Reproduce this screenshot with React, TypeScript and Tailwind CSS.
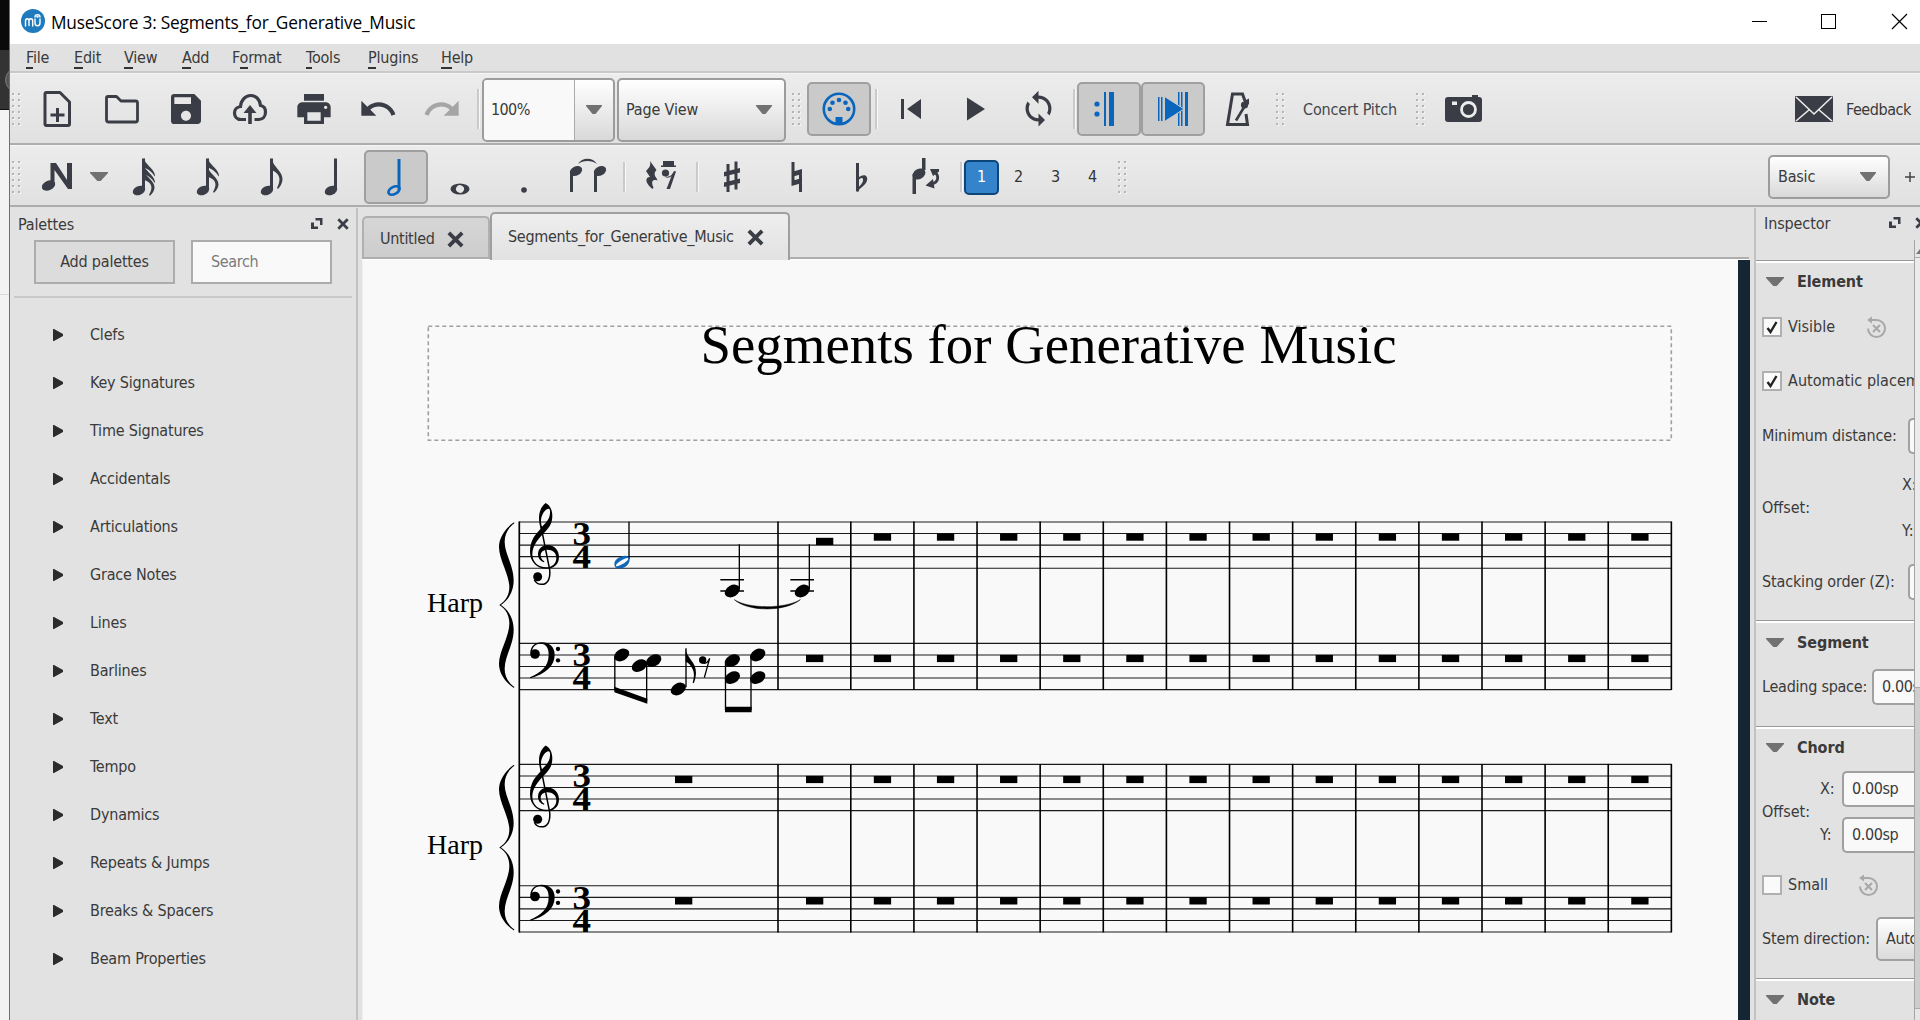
import React from "react";
import { MdLoop, MdPrint, MdRedo, MdSave, MdUndo } from "react-icons/md";

const INK = "#3a3d45";
const BLUE = "#0a66bd";

/* ---------- small shared pieces ---------- */

function Grip({ className = "" }: { className?: string }) {
  return (
    <div className={`grid shrink-0 grid-cols-2 gap-x-[4px] gap-y-[4px] ${className}`}>
      {Array.from({ length: 12 }, (_, i) => (
        <span key={i} className="size-[2px] bg-[#b4b4b4] shadow-[1px_1px_0_#f6f6f6]" />
      ))}
    </div>
  );
}

function Sep({ className = "" }: { className?: string }) {
  return <div className={`w-[3px] shrink-0 border-l-2 border-[#cacaca] bg-[#f8f8f8] ${className}`} />;
}

function Caret({ w = 16, className = "" }: { w?: number; className?: string }) {
  return (
    <svg width={w} height="10" viewBox="0 0 16 10" preserveAspectRatio="none" className={`shrink-0 ${className}`}>
      <path d="M0 0H16V1L9.5 9H6.5L0 1Z" fill="#717171" />
    </svg>
  );
}

function ToolIcon({ children, vb = "0 0 40 40", size = 40, w = 64 }: { children: React.ReactNode; vb?: string; size?: number; w?: number }) {
  return (
    <div className="flex h-[54px] shrink-0 items-center justify-center" style={{ width: w }}>
      <svg width={size} height={size} viewBox={vb} fill={INK}>
        {children}
      </svg>
    </div>
  );
}

const pressed =
  "flex h-[54px] w-[64px] shrink-0 items-center justify-center rounded-[5px] border-2 border-[#9f9f9f] bg-[#cacaca]";

/* ---------- title and menu bars ---------- */

function TitleBar() {
  return (
    <div className="flex h-[44px] shrink-0 items-center bg-white">
      <svg width="24" height="24" viewBox="0 0 24 24" className="mb-[2px] ml-[11px] shrink-0">
        <circle cx="12" cy="12" r="12" fill="#1f7bbd" />
        <path
          d="M4.500 17V12C4.500 9 8 9 8 12V16.500M8 12C8 9 11.700 9 11.700 12V17M14 10V14C14 17.600 19 17.600 19 14V10M14 8C14 4.800 19 4.800 19 8"
          fill="none"
          stroke="white"
          strokeWidth="1.400"
          strokeLinecap="round"
        />
        <circle cx="16.500" cy="7.600" r="1.200" fill="white" />
      </svg>
      <span className="ml-[6px] pt-[2px] font-['Open_Sans'] text-[17.3px] tracking-[-0.2px] whitespace-nowrap text-black [font-stretch:normal]">
        MuseScore 3: Segments_for_Generative_Music
      </span>
      <svg width="170" height="20" viewBox="1750 12 170 20" fill="none" stroke="black" shapeRendering="crispEdges" className="ml-auto shrink-0">
        <path d="M1752 21.500H1767" />
        <rect x="1821.500" y="14.500" width="14" height="14" />
        <path d="M1892 14L1907 29M1907 14L1892 29" shapeRendering="auto" strokeWidth="1.200" />
      </svg>
    </div>
  );
}

const menus: [string, number][] = [
  ["File", 48],
  ["Edit", 50],
  ["View", 58],
  ["Add", 50],
  ["Format", 74],
  ["Tools", 62],
  ["Plugins", 73],
  ["Help", 50],
];

function MenuBar() {
  return (
    <div className="h-[30px] shrink-0 border-b border-[#f4f4f4] bg-[#e1e1e1]">
      <div className="flex h-[29px] w-full border-b-2 border-[#c9c9c9] pl-[16px]">
        {menus.map(([m, w]) => {
          const k = m === "Format" ? 1 : 0;
          return (
            <span key={m} className="pt-[3px] leading-[22px] tracking-[-0.2px]" style={{ width: w }}>
              {m.slice(0, k)}
              <span className="border-b-2 border-[#333]">{m[k]}</span>
              {m.slice(k + 1)}
            </span>
          );
        })}
      </div>
    </div>
  );
}

/* ---------- main toolbar ---------- */

function MainToolbar() {
  return (
    <div className="flex h-[71px] shrink-0 items-center border-b-2 border-[#adadad] bg-gradient-to-b from-[#ececec] to-[#e1e1e1] pl-[2px]">
      <Grip />
      <div className="ml-[6px] flex">
        <ToolIcon>
          <path d="M8.500 3.500H22L31.500 13V35C31.500 35.800 30.800 36.500 30 36.500H8.500C7.700 36.500 7 35.800 7 35V5C7 4.200 7.700 3.500 8.500 3.500Z" fill="none" stroke={INK} strokeWidth="3" strokeLinejoin="round" />
          <path d="M18 19H21V24.500H26.500V27.500H21V33H18V27.500H12.500V24.500H18Z" />
        </ToolIcon>
        <ToolIcon>
          <path d="M6 7.500H14.500L19 12H33.500C35 12 35.500 12.800 35.500 14V31C35.500 32.300 34.700 33 33.500 33H6.500C5.300 33 4.500 32.300 4.500 31V9C4.500 8 5 7.500 6 7.500Z" fill="none" stroke={INK} strokeWidth="2.800" strokeLinejoin="round" />
        </ToolIcon>
        <div className="flex w-[64px] items-center justify-center">
          <MdSave size={40} color={INK} />
        </div>
        <ToolIcon>
          <path d="M16 30.500H11C6.500 30.500 4.500 27 4.500 24C4.500 20.500 7 18 10.500 17.500C11 11 15.500 6.500 20.500 6.500C26 6.500 30 10.500 30.500 16.500C33.500 17 35.500 19.500 35.500 23C35.500 27 33 30.500 29 30.500H24.500" fill="none" stroke={INK} strokeWidth="3.200" />
          <path d="M20 16L26.500 24H21.800V35H18.200V24H13.500Z" />
        </ToolIcon>
        <div className="flex w-[64px] items-center justify-center">
          <MdPrint size={40} color={INK} />
        </div>
        <div className="flex w-[64px] items-center justify-center">
          <MdUndo size={40} color={INK} />
        </div>
        <div className="flex w-[64px] items-center justify-center">
          <MdRedo size={40} color="#a5a5a5" />
        </div>
      </div>
      <Sep className="ml-[3px] h-[40px]" />
      <div className="mt-[3px] ml-[2px] flex h-[64px] w-[133px] shrink-0 rounded-[5px] border-2 border-[#9c9c9c] bg-gradient-to-b from-white to-[#d9d9d9]">
        <div className="flex w-[91px] items-center rounded-l-[3px] border-r border-[#aaa] bg-[#f9f9f9] pl-[7px] tracking-[-0.6px]">100%</div>
        <Caret className="m-auto" />
      </div>
      <div className="mt-[3px] ml-[2px] flex h-[64px] w-[169px] shrink-0 items-center justify-between rounded-[5px] border-2 border-[#9c9c9c] bg-gradient-to-b from-white to-[#d9d9d9] pr-[12px] pl-[7px]">
        <span className="tracking-[-0.15px]">Page View</span>
        <Caret />
      </div>
      <Grip className="ml-[6px]" />
      <div className={`${pressed} mt-px ml-[7px]`}>
        <svg width="34" height="34" viewBox="0 0 34 34" fill={BLUE}>
          <circle cx="17" cy="17" r="15.200" fill="none" stroke={BLUE} strokeWidth="2.600" />
          <circle cx="7.800" cy="17" r="2.300" />
          <circle cx="10.500" cy="10.800" r="2.300" />
          <circle cx="17" cy="8" r="2.300" />
          <circle cx="23.500" cy="10.800" r="2.300" />
          <circle cx="26.200" cy="17" r="2.300" />
          <rect x="13.500" y="25" width="7" height="7" />
        </svg>
      </div>
      <Sep className="ml-[4px] h-[40px]" />
      <ToolIcon>
        <path d="M11 10H14V30H11ZM31 10V30L17 20Z" />
      </ToolIcon>
      <ToolIcon w={66}>
        <path d="M12 8.500L30 20L12 31.500Z" />
      </ToolIcon>
      <div className="flex w-[60px] items-center justify-center">
        <MdLoop size={39} color={INK} />
      </div>
      <Sep className="ml-[5px] h-[40px]" />
      <div className={`${pressed} mt-px ml-[1px]`}>
        <svg width="24" height="34" viewBox="0 0 24 34" fill={BLUE} className="mr-[8px]">
          <circle cx="4" cy="12" r="2.600" />
          <circle cx="4" cy="22" r="2.600" />
          <path d="M11 0H13V34H11ZM16 0H21V34H16Z" />
        </svg>
      </div>
      <div className={`${pressed} mt-px`}>
        <svg width="30" height="34" viewBox="0 0 30 34" fill={BLUE}>
          <path d="M0 5H1.500V29H0ZM3 5H4.500V29H3ZM20 0H21.500V34H20ZM23 0H24.500V34H23ZM27 0H30V34H27Z" />
          <path d="M6.500 4.500L26 17L6.500 29.500Z" stroke="#cacaca" strokeWidth="1" />
        </svg>
      </div>
      <ToolIcon w={66}>
        <path d="M27 12L24.500 5H14.500L9.500 35.500H29.500L28 25" fill="none" stroke={INK} strokeWidth="3" />
        <path d="M18 31.500L28 15" stroke={INK} strokeWidth="2.600" />
        <circle cx="26.500" cy="16" r="3.600" />
        <path d="M26 12L31 9.500V15L28 18Z" />
      </ToolIcon>
      <Grip className="ml-[5px]" />
      <span className="mt-[3px] ml-[19px] w-[95px] tracking-[-0.15px] whitespace-nowrap text-[#44474e]">Concert Pitch</span>
      <Grip className="ml-[18px]" />
      <svg width="38" height="28" viewBox="0 0 38 28" className="ml-[21px] shrink-0" fill={INK}>
        <path d="M3 2H27V0H33V2H34C36 2 37 3 37 5V24C37 26 36 27 34 27H3C1 27 0 26 0 24V5C0 3 1 2 3 2Z" />
        <circle cx="23.500" cy="14.500" r="7" fill="none" stroke="#ececec" strokeWidth="2.800" />
        <rect x="7" y="6.500" width="5" height="3.500" fill="#ececec" />
      </svg>
      <svg width="38" height="26" viewBox="0 0 38 26" className="ml-auto shrink-0">
        <rect width="38" height="26" fill={INK} rx="1" />
        <path d="M1 1L19 18L37 1M1 25L14.500 13.500M37 25L23.500 13.500" fill="none" stroke="#ececec" strokeWidth="1.600" />
      </svg>
      <span className="mt-[2px] mr-[11px] ml-[13px] w-[63px] tracking-[-0.45px]">Feedback</span>
    </div>
  );
}

/* ---------- note input toolbar ---------- */

function NoteGlyph({ flags }: { flags: number }) {
  return (
    <ToolIcon>
      <ellipse cx="16" cy="33.500" rx="6.500" ry="4.400" transform="rotate(-25 16 33.500)" />
      <path d="M19 1.500H22V33H19Z" />
      {Array.from({ length: flags }, (_, i) => {
        if (flags === 1 || i === flags - 1) {
          const y = flags === 1 ? 2 : flags === 2 ? 10 : 13;
          const sy = flags === 1 ? 1 : 0.86;
          return (
            <path
              key={i}
              transform={`translate(21 ${y}) scale(1 ${sy})`}
              d="M0 0C1 8 11 12 10.500 21C10 25 8 28 6 30L5 29C8 23 8.500 18 5 14.500C3 12.500 1 11.500 0 11.500Z"
            />
          );
        }
        return <path key={i} transform={`translate(21 ${1 + i * 6.500})`} d="M0 0C1 7 9 9 11 17L10.500 18.500C8 13 3 11 0 9.500Z" />;
      })}
    </ToolIcon>
  );
}

function NoteToolbar() {
  return (
    <div className="flex h-[62px] shrink-0 items-center border-t border-b-2 border-t-[#f5f5f5] border-b-[#adadad] bg-gradient-to-b from-[#ececec] to-[#e1e1e1] pt-[3px] pl-[2px]">
      <Grip />
      <svg width="30" height="28" viewBox="0 0 30 28" className="ml-[22px] shrink-0" fill={INK}>
        <ellipse cx="6.500" cy="22.500" rx="7" ry="4.700" transform="rotate(-25 6.500 22.500)" />
        <path d="M8.500 0H14L25 17V0H30V26H26L12.500 7V23H8.500Z" />
      </svg>
      <Caret w={18} className="ml-[18px]" />
      <div className="ml-[3px] flex">
        <NoteGlyph flags={3} />
        <NoteGlyph flags={2} />
        <NoteGlyph flags={1} />
        <NoteGlyph flags={0} />
      </div>
      <div className={`${pressed} -ml-[3px]`}>
        <svg width="40" height="40" viewBox="0 0 40 40" fill={BLUE} className="ml-[5px]">
          <ellipse cx="15" cy="33.500" rx="6" ry="3.600" transform="rotate(-28 15 33.500)" fill="none" stroke={BLUE} strokeWidth="2.600" />
          <path d="M18.500 2H21.500V33H18.500Z" />
        </svg>
      </div>
      <ToolIcon>
        <ellipse cx="20" cy="32" rx="9.500" ry="5.500" />
        <ellipse cx="20" cy="32" rx="4" ry="3.800" fill="#e6e6e6" transform="rotate(30 20 32)" />
      </ToolIcon>
      <ToolIcon>
        <circle cx="20" cy="33" r="2.800" />
      </ToolIcon>
      <ToolIcon>
        <ellipse cx="8" cy="14" rx="6.500" ry="4.600" transform="rotate(-28 8 14)" />
        <ellipse cx="32" cy="14" rx="6.500" ry="4.600" transform="rotate(-28 32 14)" />
        <path d="M2 14H5V35H2ZM26 14H29V35H26ZM10 7C14 0 25 0 29 7C24 3 15 3 10 7Z" />
      </ToolIcon>
      <Sep className="ml-[3px] h-[30px]" />
      <ToolIcon w={70}>
        <path d="M9 4L15.500 13C13 16 13 18 16 22L16.500 23.500C12 22 9.500 24 12.500 30.500L11.500 32C3.500 26 4 20 9 20L5 14C8.500 10.500 10 8.500 9 4Z" />
        <path d="M22 4H33V8.500H35V10H20V8.500H22Z" />
        <circle cx="24.500" cy="16" r="3.600" />
        <path d="M24.500 19.500C29 20.500 31 18 33 14L35 14.500L29 32H25.500L30.500 19C29 20.500 27 21.500 24 20Z" />
      </ToolIcon>
      <Sep className="h-[30px]" />
      <ToolIcon w={66}>
        <path d="M14.500 7H17.500V35H14.500ZM22.500 4.500H25.500V32.500H22.500ZM12 15L28 11V15.500L12 19.500ZM12 25.500L28 21.500V26L12 30Z" />
      </ToolIcon>
      <ToolIcon>
        <path d="M14.500 5H17.500V27H14.500ZM22 13H25V35H22ZM14.500 15L25 12V17L14.500 20ZM14.500 24L25 21V26L14.500 29Z" />
      </ToolIcon>
      <ToolIcon>
        <path d="M15 6H18V34.500H15Z" />
        <path d="M17 21C22 16 27.500 18 26 23.500C25 28 20 30 16.500 34.500V31C20 28 22.500 25 22 22.500C21.500 20 19 21 17 24Z" />
      </ToolIcon>
      <ToolIcon w={63}>
        <ellipse cx="14" cy="17" rx="6.800" ry="5" transform="rotate(-28 14 17)" />
        <path d="M7.500 17H11V37H7.500ZM17 1H20.500V13H17Z" />
        <path d="M27 27C34 25 34 19 30 15" fill="none" stroke={INK} strokeWidth="2.800" />
        <path d="M25 12H34V14.500L28 19ZM20.500 28.500L28 22L29.500 31.500Z" />
      </ToolIcon>
      <Sep className="ml-[4px] h-[30px]" />
      <div className="ml-[1px] flex size-[35px] shrink-0 items-center justify-center rounded-[5px] border-2 border-[#0e4579] bg-[#3584cb] text-white">1</div>
      {["2", "3", "4"].map((v) => (
        <span key={v} className="w-[37px] shrink-0 pl-[2px] text-center text-[#333]">{v}</span>
      ))}
      <Grip className="ml-[8px]" />
      <div className="mr-[20px] ml-auto flex h-[44px] w-[122px] shrink-0 items-center justify-between rounded-[5px] border-2 border-[#9c9c9c] bg-gradient-to-b from-white to-[#d9d9d9] pr-[12px] pl-[8px]">
        <span className="tracking-[-0.2px]">Basic</span>
        <Caret />
      </div>
      <svg width="10" height="10" viewBox="0 0 10 10" className="mr-[5px] -ml-[5px] shrink-0">
        <path d="M5 0V10M0 5H10" stroke="#444" strokeWidth="1.500" />
      </svg>
    </div>
  );
}

/* ---------- dock header glyphs ---------- */

function FloatIcon() {
  return (
    <svg width="12" height="12" viewBox="0 0 12 12" fill={INK} className="shrink-0">
      <path d="M4.500 0H11.500V7H9V2.500H4.500ZM0 4.500H3V8.500H7V11H0Z" />
    </svg>
  );
}

function Cross({ size = 12 }: { size?: number }) {
  return (
    <svg width={size} height={size} viewBox="0 0 12 12" className="shrink-0">
      <path d="M1.300 1.300L10.700 10.700M10.700 1.300L1.300 10.700" stroke={INK} strokeWidth="2.700" />
    </svg>
  );
}

/* ---------- palettes ---------- */

const palettes = [
  "Clefs", "Key Signatures", "Time Signatures", "Accidentals", "Articulations", "Grace Notes", "Lines",
  "Barlines", "Text", "Tempo", "Dynamics", "Repeats & Jumps", "Breaks & Spacers", "Beam Properties",
];

function Palettes() {
  return (
    <div className="flex w-[348px] shrink-0 flex-col border-r-2 border-[#c2c2c2]">
      <div className="flex h-[32px] shrink-0 items-center pr-[7px] pl-[8px]">
        <span className="mt-[2px] mr-auto tracking-[-0.15px]">Palettes</span>
        <FloatIcon />
        <span className="w-[14px]" />
        <Cross />
      </div>
      <div className="flex gap-[16px] pl-[24px]">
        <button className="h-[44px] w-[141px] border-2 border-[#acacac] bg-[#dcdcdc] tracking-[-0.2px]">Add palettes</button>
        <div className="flex h-[44px] w-[141px] items-center border-2 border-[#acacac] bg-[#f9f9f9] pl-[18px] tracking-[-0.35px] text-[#7b7b7b]">Search</div>
      </div>
      <div className="mt-[12px] mr-[4px] ml-[4px] h-[2px] shrink-0 bg-[#c8c8c8]" />
      <div className="mt-[13px] flex flex-col">
        {palettes.map((p) => (
          <div key={p} className="flex h-[48px] shrink-0 items-center">
            <svg width="10" height="12" viewBox="0 0 10 12" className="ml-[43px]">
              <path d="M0 0H1L10 5V7L1 12H0Z" fill="#2c2c2c" />
            </svg>
            <span className="ml-[27px] tracking-[-0.2px]">{p}</span>
          </div>
        ))}
      </div>
    </div>
  );
}

/* ---------- score ---------- */

const staffTops = [522, 643.4, 764.4, 885.8];
const barXs = Array.from({ length: 14 }, (_, i) => 850.8 + i * 63.12);

function StaffGroup({ top, label }: { top: number; label: number }) {
  return (
    <g>
      <text x="427" y={label} fontSize="27.500" textLength="56" lengthAdjust="spacingAndGlyphs">Harp</text>
      {/* glyphs are drawn on a grid of a third of a pixel */}
      <g transform={`translate(420 ${top - 32}) scale(0.33333)`}>
        <path d="M282 98C255 116 237 145 237 172C237 210 268 255 268 292C268 315 258 333 238 346C258 359 268 377 268 402C268 440 237 485 237 522C237 550 255 577 282 595L283 592C264 578 254 560 254 537C254 500 281 465 281 420C281 385 264 360 243 346C264 332 281 307 281 272C281 227 254 192 254 157C254 134 264 115 283 101Z" />
        <path fillRule="evenodd" d="M377 40C362 52 357 68 357 86C357 96 359 106 362 117C346 134 330 152 330 186C330 216 351 237 378 237C402 237 417 224 417 202C417 182 403 166 383 166C366 166 354 178 354 194C354 206 362 215 372 218L373 215C366 211 362 205 362 197C362 187 370 180 382 180C398 180 409 189 409 204C409 221 397 233 378 233C355 233 337 217 337 194C337 170 352 152 368 134C386 115 397 104 397 78C397 62 390 46 377 40ZM386 57C376 57 363 75 363 94C363 101 364 106 366 111C380 97 389 88 390 70C391 62 389 57 386 57Z" />
        <path d="M363 110L389 240C392 268 382 284 365 284C355 284 347 279 343 270" fill="none" stroke="black" strokeWidth="4.500" />
        <circle cx="353" cy="261" r="13.500" />
        <circle cx="345" cy="493" r="14.500" />
        <path d="M331 490C331 470 346 458 365 458C388 458 404 472 404 495C404 530 375 552 331 566L330 563C362 548 386 532 386 495C386 474 378 462 362 462C348 462 338 470 336 484Z" />
        <circle cx="414" cy="478" r="6.500" />
        <circle cx="414" cy="512" r="6.500" />
      </g>
    </g>
  );
}

function Digit({ y, d }: { y: number; d: string }) {
  return (
    <text x="572.500" y={y} fontSize="34" fontWeight="bold" textLength="18.500" lengthAdjust="spacingAndGlyphs">{d}</text>
  );
}

function Head({ x, y }: { x: number; y: number }) {
  return <ellipse cx={x} cy={y} rx="24.500" ry="17" transform={`rotate(-30 ${x} ${y})`} />;
}

function Score() {
  return (
    <svg width="1375" height="760" viewBox="363 260 1375 760" className="block shrink-0 bg-[#f9f9f9]" fontFamily="Liberation Serif, serif">
      <rect x="428.300" y="326.200" width="1243" height="114" fill="none" stroke="#a0a0a0" strokeWidth="1.600" strokeDasharray="4 3" />
      <text x="700.500" y="363" fontSize="55" textLength="696" lengthAdjust="spacingAndGlyphs">Segments for Generative Music</text>
      {staffTops.map((t) => (
        <g key={t}>
          {[0, 1, 2, 3, 4].map((i) => (
            <path key={i} d={`M519 ${t + i * 11.55}H1671.500`} stroke="#1a1a1a" strokeWidth="1.100" />
          ))}
          <Digit y={t + 22.7} d="3" />
          <Digit y={t + 46} d="4" />
        </g>
      ))}
      <path d="M519.300 521.500V932.500" stroke="black" strokeWidth="1.700" />
      {[522, 764.4].map((t) => (
        <g key={t}>
          {[778, ...barXs].map((x) => (
            <path key={x} d={`M${x} ${t - 0.5}V${t + 168}`} stroke="black" strokeWidth="1.600" />
          ))}
        </g>
      ))}
      <StaffGroup top={521.7} label={612} />
      <StaffGroup top={764.2} label={854} />
      {staffTops.map((t, s) => (
        <g key={t}>
          {s > 1 && <rect x="675" y={t + 11.5} width="17.300" height="7.200" />}
          {s > 0 && <rect x="806" y={t + 11.5} width="17.300" height="7.200" />}
          {barXs.slice(0, 13).map((x) => (
            <rect key={x} x={x + 23} y={t + 11.5} width="17.300" height="7.200" />
          ))}
        </g>
      ))}
      <rect x="816" y="537.800" width="17.300" height="7.200" />
      <g transform="translate(420 490) scale(0.33333)">
        <path d="M627 95V208" stroke="black" strokeWidth="4" />
        <path fillRule="evenodd" fill="#0f66b8" d="M583 222C583 208 600 197 616 197C624 197 629 201 629 209C629 224 612 236 597 236C588 236 583 231 583 222ZM588 228C592 234 628 213 625 205C621 198 585 220 588 228Z" />
        <path d="M901 269H972M901 303H972M1111 269H1182M1111 303H1182" stroke="black" strokeWidth="4.500" />
        <path d="M958 163V298M1168 163V298" stroke="black" strokeWidth="4" />
        <Head x={937} y={303} />
        <Head x={1147} y={303} />
        <path d="M943 329C985 357 1095 357 1141 329C1095 366 985 366 943 329Z" stroke="black" strokeWidth="1.500" />
        <Head x={605} y={495} />
        <Head x={658} y={527} />
        <Head x={701} y={512} />
        <Head x={775} y={597} />
        <Head x={937} y={512} />
        <Head x={1013} y={495} />
        <Head x={937} y={563} />
        <Head x={1013} y={563} />
        <path d="M584.500 500V600M680 515V632M798 475V592M916.500 515V660M993 498V660" stroke="black" strokeWidth="4" />
        <path d="M583 590L682 626V641L583 607ZM915 650H995V667H915Z" />
        <path d="M797 475C799 505 829 515 828 550C827 563 825 572 821 580L818 578C822 565 824 550 818 538C813 526 806 518 797 515Z" />
        <circle cx="848" cy="510" r="11" />
        <path d="M848 519C858 523 864 517 869 505L853 563" fill="none" stroke="black" strokeWidth="4" />
      </g>
    </svg>
  );
}

function ScoreArea() {
  return (
    <div className="flex w-[1396px] shrink-0 flex-col pl-[4px]">
      <div className="relative flex h-[52px] shrink-0 items-end pb-[1px]">
        <div className="absolute bottom-[1px] left-0 h-[2px] w-[1387px] bg-[#aeaeae]" />
        <div className="absolute bottom-0 left-0 h-[1px] w-[1387px] bg-white" />
        <div className="mb-[2px] flex h-[41px] w-[128px] items-center rounded-t-[5px] border-2 border-b-0 border-[#b0b0b0] bg-gradient-to-b from-[#d6d6d6] to-[#cdcdcd] pt-[3px] pl-[16px]">
          <span className="mr-[12px] w-[55px] tracking-[-0.3px]">Untitled</span>
          <Cross size={17} />
        </div>
        <div className="relative -mb-[1px] flex h-[48px] w-[300px] items-center rounded-t-[5px] border-2 border-b-0 border-[#9f9f9f] bg-gradient-to-b from-[#eeeeee] to-[#e2e2e2] pl-[16px]">
          <span className="mr-[13px] w-[226px] tracking-[-0.3px] whitespace-nowrap">Segments_for_Generative_Music</span>
          <Cross size={17} />
        </div>
      </div>
      <div className="flex border-l border-[#f0f0f0]">
        <Score />
        <div className="w-[12px] shrink-0 bg-[#152632]" />
      </div>
    </div>
  );
}

/* ---------- inspector ---------- */

function Section({ title, h, pad, children }: { title: string; h: number; pad: number; children?: React.ReactNode }) {
  return (
    <div className="shrink-0 border-t border-[#999]">
      <div className="border-t-2 border-white" style={{ paddingBottom: pad }}>
        <div className="flex items-center pl-[10px]" style={{ height: h }}>
          <Caret w={18} />
          <span className="ml-[13px] font-bold tracking-[-0.1px]">{title}</span>
        </div>
        {children}
      </div>
    </div>
  );
}

function Row({ h, children }: { h: number; children: React.ReactNode }) {
  return (
    <div className="flex items-center pl-[6px] whitespace-nowrap" style={{ height: h }}>
      {children}
    </div>
  );
}

function Check({ on = false }: { on?: boolean }) {
  return (
    <span className="mr-[6px] flex size-[20px] shrink-0 items-center justify-center border-2 border-[#b0b0b0] bg-[#fafafa]">
      {on && (
        <svg width="12" height="13" viewBox="0 0 12 13">
          <path d="M1.500 7L4.500 11L10.500 1" fill="none" stroke="#222" strokeWidth="2.400" />
        </svg>
      )}
    </span>
  );
}

function Reset() {
  return (
    <svg width="21" height="23" viewBox="0 0 21 23" fill="none" stroke="#a8a8a8" strokeWidth="2" className="shrink-0">
      <path d="M4.500 4H10.500A8.500 8.500 0 1 1 2 12.500M7 9L14 16M14 9L7 16" />
      <path d="M1 4L6 0.500V7.500Z" fill="#a8a8a8" stroke="none" />
    </svg>
  );
}

const spin = "flex h-[36px] shrink-0 items-center rounded-l-[5px] border-2 border-r-0 border-[#a0a0a0] bg-[#f9f9f9] pl-[8px] tracking-[-0.4px]";

function Inspector() {
  return (
    <div className="flex min-w-0 flex-1 flex-col overflow-hidden border-l-2 border-[#c2c2c2]">
      <div className="flex h-[52px] shrink-0 items-start pl-[8px]">
        <span className="mt-[5px] mr-[59px] w-[66px] leading-[22px] tracking-[-0.1px]">Inspector</span>
        <span className="mt-[9px] flex gap-[14px]">
          <FloatIcon />
          <Cross />
        </span>
      </div>
      <div className="-mt-[20px] flex min-h-0 flex-1">
        <div className="mt-[20px] w-[158px] shrink-0 overflow-hidden">
          <Section title="Element" h={38} pad={10}>
            <Row h={52}>
              <Check on />
              <span className="w-[78px]">Visible</span>
              <Reset />
            </Row>
            <Row h={56}>
              <Check on />
              <span className="tracking-[0.05px]">Automatic placement</span>
            </Row>
            <Row h={53}>
              <span className="w-[146px] shrink-0 tracking-[-0.15px]">Minimum distance:</span>
              <div className={`${spin} w-[40px]`} />
            </Row>
            <Row h={92}>
              <span className="w-[140px] shrink-0">Offset:</span>
              <div className="flex flex-col">
                <span className="flex h-[46px] items-center">X:</span>
                <span className="flex h-[46px] items-center">Y:</span>
              </div>
            </Row>
            <Row h={56}>
              <span className="w-[146px] shrink-0 tracking-[-0.15px]">Stacking order (Z):</span>
              <div className={`${spin} w-[40px]`} />
            </Row>
          </Section>
          <Section title="Segment" h={39} pad={14}>
            <Row h={50}>
              <span className="w-[110px] shrink-0 tracking-[-0.25px]">Leading space:</span>
              <div className={`${spin} w-[80px]`}>0.00sp</div>
            </Row>
          </Section>
          <Section title="Chord" h={37} pad={12}>
            <Row h={92}>
              <span className="w-[58px] shrink-0">Offset:</span>
              <div className="flex flex-col">
                {["X:", "Y:"].map((a) => (
                  <span key={a} className="flex h-[46px] items-center">
                    <span className="w-[22px]">{a}</span>
                    <span className={`${spin} w-[100px]`}>0.00sp</span>
                  </span>
                ))}
              </div>
            </Row>
            <Row h={54}>
              <Check />
              <span className="w-[70px]">Small</span>
              <Reset />
            </Row>
            <Row h={54}>
              <span className="w-[114px] shrink-0 tracking-[-0.15px]">Stem direction:</span>
              <div className="flex h-[44px] w-[90px] shrink-0 items-center rounded-l-[5px] border-2 border-[#a0a0a0] bg-gradient-to-b from-white to-[#dadada] pl-[8px] tracking-[-0.4px]">
                Auto
              </div>
            </Row>
          </Section>
          <Section title="Note" h={37} pad={20} />
        </div>
        <div className="flex w-[6px] shrink-0 flex-col border-l border-[#a5a5a5] bg-[#cdcdcd]">
          <div className="flex h-[18px] items-end justify-end border-b border-[#aaa] bg-[#e6e6e6] pb-[3px]">
            <span className="size-0 border-b-[5px] border-l-[4px] border-b-[#777] border-l-transparent" />
          </div>
          <div className="h-[430px] border-b border-[#aaa] bg-[#ebebeb]" />
          <div className="h-[320px]" />
          <div className="flex-1 border-t border-[#aaa] bg-[#e6e6e6]" />
        </div>
      </div>
    </div>
  );
}

export default function App() {
  return (
    <div className="flex h-[1020px] w-[1920px] overflow-hidden bg-[#f3f3f3] font-['DejaVu_Sans_Condensed','DejaVu_Sans',sans-serif] text-[16px] text-[#3a3a3a] [font-stretch:condensed]">
      <div className="flex w-[9px] shrink-0 flex-col">
        <div className="h-[50px] bg-[#0a0a0a]" />
        <div className="flex h-[60px] items-center justify-end overflow-hidden border-b border-[#111] bg-[#333]">
          <span className="-mr-[22px] size-[26px] shrink-0 rounded-full border border-[#777] bg-[#555]" />
        </div>
        <div className="h-[184px]" />
        <div className="h-px bg-[#d8d8d8]" />
      </div>
      <div className="flex w-[1911px] shrink-0 flex-col border-l border-[#707070] bg-[#e2e2e2]">
        <TitleBar />
        <MenuBar />
        <MainToolbar />
        <NoteToolbar />
        <div className="mt-px flex min-h-0 flex-1">
          <Palettes />
          <ScoreArea />
          <Inspector />
        </div>
      </div>
    </div>
  );
}
